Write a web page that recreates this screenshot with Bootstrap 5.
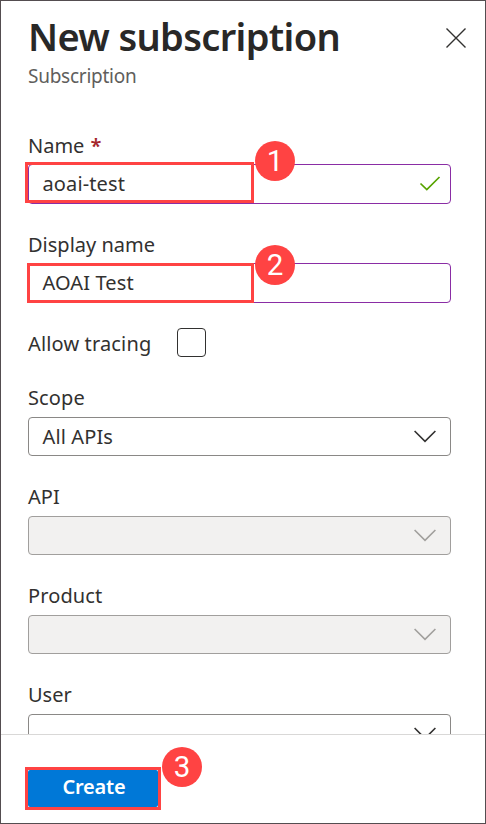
<!DOCTYPE html>
<html lang="en">
<head>
<meta charset="utf-8">
<meta name="viewport" content="width=device-width, initial-scale=1">
<title>New subscription</title>
<link href="https://cdn.jsdelivr.net/npm/bootstrap@5.3.0/dist/css/bootstrap.min.css" rel="stylesheet">
<style>
  body { font-family: "Noto Sans", "Open Sans", sans-serif; font-size: 20px; color: #323130; }
  .panel { height: 824px; border: 1px solid #544d50; }
  .panel-head { height: 131px; padding: 10px 19px 0 27px; }
  .panel-title { font-size: 38px; font-weight: 600; line-height: 50px; letter-spacing: -.65px; color: #292827; white-space: nowrap; }
  .panel-sub { font-size: 19px; line-height: 30px; letter-spacing: -.25px; color: #605e5c; }
  .close-btn { margin-top: 17px; }
  .panel-body { padding: 0 34px 0 27px; height: 602px; }
  .panel-foot { border-top: 1px solid #d9d8d7; padding: 35px 0 0 27px; }
  .field { height: 99px; }
  .field-label { line-height: 28px; height: 32px; }
  .req { color: #a4262c; font-weight: 600; margin-left: 1px; }
  .box { height: 40px; border: 1px solid #8a2da5; border-radius: 4px; padding: 0 14px 0 13.5px; }
  .box.valid { padding-right: 9px; }
  .pick .field-label { height: 33px; }
  .pick .box { height: 39px; border-color: #8a8886; }
  .pick .box.off { background: #f2f1f0; border-color: #a19f9d; color: #a19f9d; }
  .trace { height: 54px; line-height: 28px; }
  .trace-label { width: 124px; letter-spacing: .15px; white-space: nowrap; }
  .t-wide { letter-spacing: .12px; }
  .tick-box { width: 29px; height: 29px; margin: -2px 0 0 25px; border: 1px solid #323130; border-radius: 4px; }
  .create-btn { width: 130px; height: 37px; border-radius: 2px; background: #0078d7; color: #fff; font-weight: 600; font-size: 20px; line-height: 1; letter-spacing: -.2px; }
  .create-btn span { padding: 0 0 4px 2px; }
  .outline { position: absolute; border: 3px solid #ff4343; }
  .step { position: absolute; width: 40px; height: 40px; border-radius: 50%; background: #ff4343; color: #fff; font: 29.5px/41px Roboto, "Liberation Sans", sans-serif; text-align: center; }
  .o1 { left: -3px; top: 30px; width: 229px; height: 41px; }
  .s1 { left: 227px; top: 9px; }
  .o2 { left: -1px; top: 32px; width: 227px; height: 40px; }
  .s2 { left: 227px; top: 14px; }
  .o3 { left: -3px; top: -3px; width: 136px; height: 43px; }
  .s3 { left: 134px; top: -23px; }
  svg { fill: none; flex: none; display: block; }
</style>
<script src="https://cdn.jsdelivr.net/npm/bootstrap@5.3.0/dist/js/bootstrap.bundle.min.js"></script>
</head>
<body>
<main class="panel d-flex flex-column overflow-hidden bg-white">
  <header class="panel-head d-flex justify-content-between flex-shrink-0">
    <div>
      <h1 class="panel-title m-0">New subscription</h1>
      <div class="panel-sub">Subscription</div>
    </div>
    <button type="button" class="btn close-btn p-0 border-0 align-self-start" aria-label="Close">
      <svg width="20" height="20" stroke="#323130" stroke-width="1.4"><path d="M.5 .5 19.5 19.5M19.5 .5 .5 19.5"/></svg>
    </button>
  </header>
  <section class="panel-body overflow-hidden flex-shrink-0">
    <div class="field position-relative">
      <div class="field-label">Name <span class="req">*</span></div>
      <div class="box valid d-flex align-items-center justify-content-between">
        <span class="t-wide">aoai-test</span>
        <svg width="22" height="16" stroke="#57a300" stroke-width="1.7"><path d="M1.5 7.5 7.8 13.6 20.5 1"/></svg>
      </div>
      <div class="outline o1"></div><div class="step s1">1</div>
    </div>
    <div class="field position-relative">
      <div class="field-label">Display name</div>
      <div class="box d-flex align-items-center t-wide">AOAI Test</div>
      <div class="outline o2"></div><div class="step s2">2</div>
    </div>
    <div class="trace d-flex align-items-start">
      <span class="trace-label">Allow tracing</span><span class="tick-box" role="checkbox" aria-checked="false"></span>
    </div>
    <div class="field pick">
      <div class="field-label t-wide">Scope</div>
      <div class="box d-flex align-items-center justify-content-between"><span class="t-wide">All APIs</span><svg width="22" height="13" stroke="currentColor" stroke-width="1.6"><path d="M.6 1 11 11.4 21.4 1"/></svg></div>
    </div>
    <div class="field pick">
      <div class="field-label">API</div>
      <div class="box off d-flex align-items-center justify-content-end"><svg width="22" height="13" stroke="currentColor" stroke-width="1.6"><path d="M.6 1 11 11.4 21.4 1"/></svg></div>
    </div>
    <div class="field pick">
      <div class="field-label t-wide">Product</div>
      <div class="box off d-flex align-items-center justify-content-end"><svg width="22" height="13" stroke="currentColor" stroke-width="1.6"><path d="M.6 1 11 11.4 21.4 1"/></svg></div>
    </div>
    <div class="field pick">
      <div class="field-label">User</div>
      <div class="box d-flex align-items-center justify-content-end"><svg width="22" height="13" stroke="currentColor" stroke-width="1.6"><path d="M.6 1 11 11.4 21.4 1"/></svg></div>
    </div>
  </section>
  <footer class="panel-foot flex-grow-1">
    <div class="position-relative">
      <button type="button" class="btn create-btn d-flex align-items-center justify-content-center border-0 p-0"><span>Create</span></button>
      <div class="outline o3"></div><div class="step s3">3</div>
    </div>
  </footer>
</main>
</body>
</html>
